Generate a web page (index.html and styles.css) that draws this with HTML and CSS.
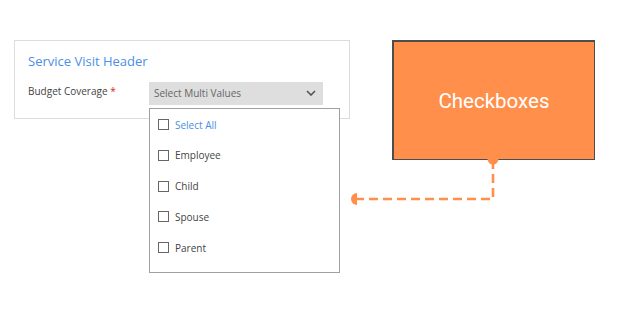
FILE: index.html
```html
<!DOCTYPE html>
<html lang="en">
  <head>
    <meta charset="UTF-8" />
    <title>Checkboxes</title>
    <link rel="stylesheet" href="styles.css">
  </head>
  <body>
    <div class="page">
      <div class="card">
        <h2 class="card-title">Service Visit Header</h2>
        <div class="field">
          <label class="field-label">Budget Coverage <span class="req">*</span></label>
          <div class="select">
            <div class="select-box">
              <span>Select Multi Values</span>
              <svg class="chevron" width="10" height="6" viewBox="0 0 10 6">
                <path d="M1 1 L5 5 L9 1" fill="none" stroke="#555" stroke-width="1.6" />
              </svg>
            </div>
            <ul class="dropdown">
              <li class="option option-all"><span class="box"></span>Select All</li>
              <li class="option"><span class="box"></span>Employee</li>
              <li class="option"><span class="box"></span>Child</li>
              <li class="option"><span class="box"></span>Spouse</li>
              <li class="option"><span class="box"></span>Parent</li>
            </ul>
          </div>
        </div>
      </div>

      <div class="node">Checkboxes</div>

      <svg class="connector" width="618" height="313" viewBox="0 0 618 313">
        <path d="M493 160 L493 199 L357 199" fill="none" stroke="#ff8f4b" stroke-width="2.6" stroke-dasharray="9 5" />
        <circle cx="493" cy="159" r="5.5" fill="#ff8f4b" />
        <path d="M357 193 A6 6 0 0 0 357 205 Z" fill="#ff8f4b" />
      </svg>
    </div>
  </body>
</html>
```

FILE: styles.css
```css
body {
  margin: 0;
  font-family: "Open Sans", "Noto Sans", sans-serif;
  background: #fff;
}

.page {
  position: relative;
  width: 618px;
  height: 313px;
  padding: 40px 0 0 14px;
  box-sizing: border-box;
  overflow: hidden;
}

.card {
  position: relative;
  width: 336px;
  height: 79px;
  box-sizing: border-box;
  border: 1px solid #dcdcdc;
  background: #fff;
  padding: 11px 13px 0;
}

.card-title {
  margin: 0 0 12px;
  font-size: 13px;
  font-weight: normal;
  color: #4a8fe6;
}

.field {
  display: flex;
  align-items: flex-start;
}

.field-label {
  width: 121px;
  font-size: 10px;
  color: #444;
  padding-top: 2px;
}

.req {
  color: #d22;
}

.select {
  position: relative;
}

.select-box {
  width: 174px;
  height: 23px;
  box-sizing: border-box;
  background: #dedede;
  display: flex;
  align-items: center;
  justify-content: space-between;
  padding: 0 5px 2px 5px;
  font-size: 10px;
  color: #666;
}

.chevron {
  margin-right: 2px;
}

.dropdown {
  position: absolute;
  top: 26px;
  left: 0;
  width: 191px;
  height: 165px;
  box-sizing: border-box;
  margin: 0;
  padding: 7px 0 0 8px;
  list-style: none;
  background: #fff;
  border: 1px solid #a0a0a0;
  z-index: 2;
}

.option {
  display: flex;
  align-items: center;
  height: 17px;
  margin-bottom: 13.75px;
  font-size: 10px;
  color: #444;
}

.option-all {
  color: #4a8fe6;
}

.box {
  width: 9px;
  height: 9px;
  border: 1px solid #666;
  margin-right: 6px;
  flex-shrink: 0;
}

.node {
  position: absolute;
  left: 392px;
  top: 40px;
  width: 203px;
  height: 120px;
  box-sizing: border-box;
  background: #ff8f4b;
  border: 1px solid #4d4d4d;
  border-width: 2px 1px 1px 2px;
  color: #fff;
  font-family: "Roboto", sans-serif;
  font-size: 20.5px;
  display: flex;
  align-items: center;
  justify-content: center;
}

.connector {
  position: absolute;
  left: 0;
  top: 0;
  pointer-events: none;
}
```
